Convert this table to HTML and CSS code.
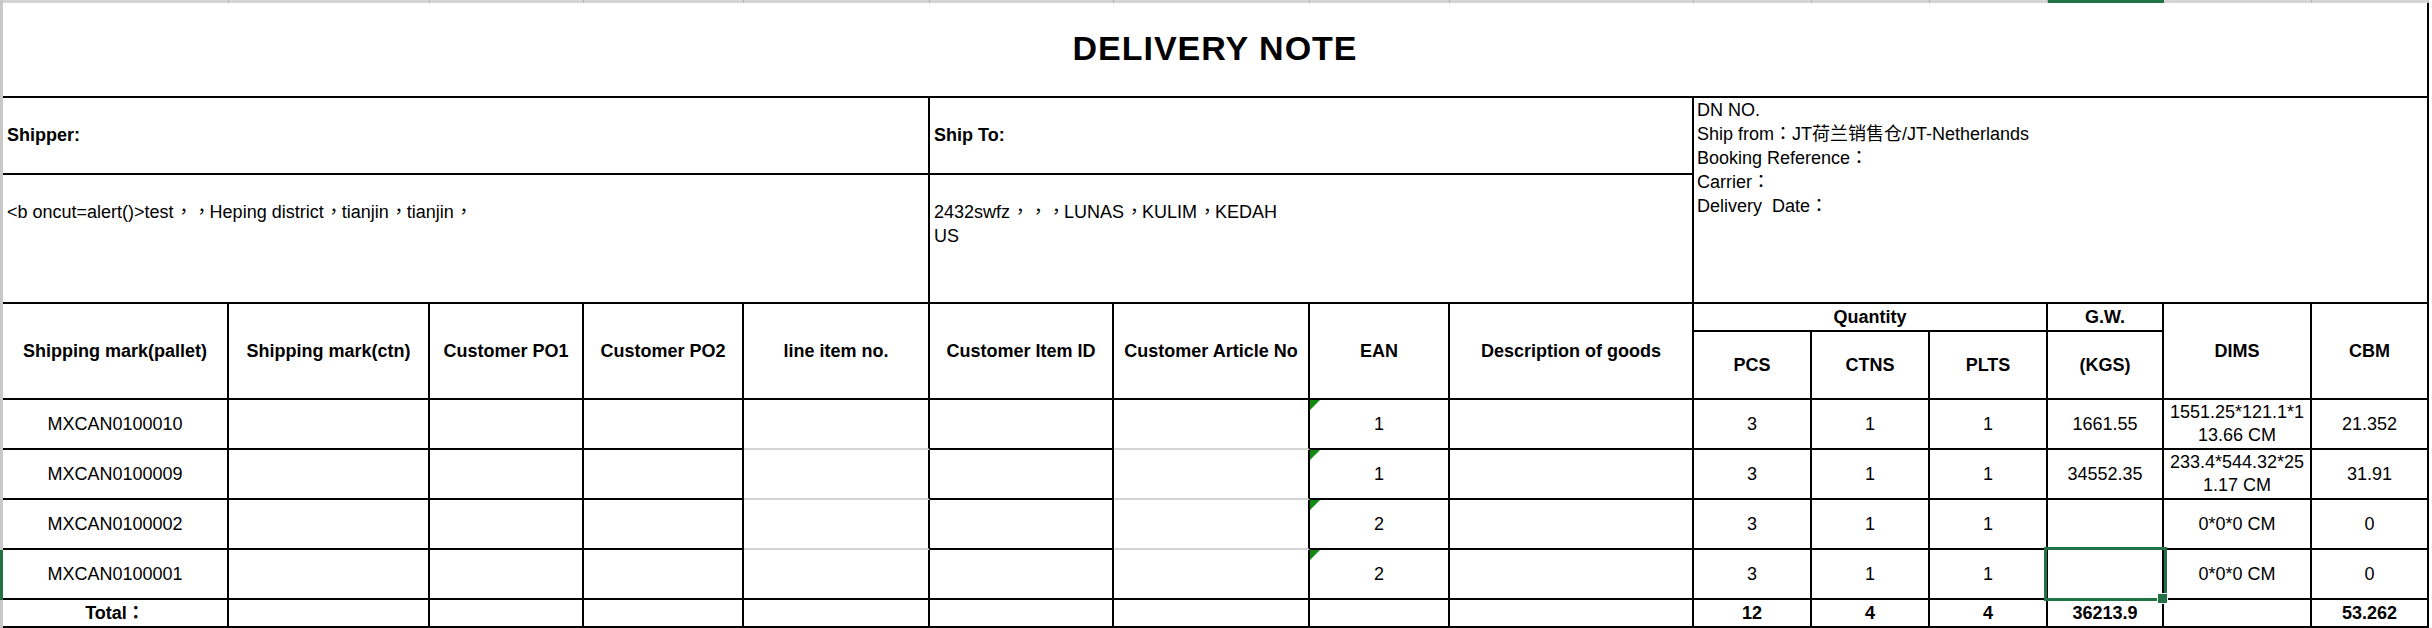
FILE: index.html
```html
<!DOCTYPE html>
<html lang="en">
<head>
<meta charset="utf-8">
<title>Delivery Note</title>
<link rel="stylesheet" href="styles.css">
</head>
<body>
<div class="sheet">
  <div class="edge-r"></div>
  <div class="edge-l"></div>
  <div class="edge-l edge-sel"></div>

  <div class="hd corner"></div>
  <div class="hd"></div><div class="hd"></div><div class="hd"></div><div class="hd"></div>
  <div class="hd"></div><div class="hd"></div><div class="hd"></div><div class="hd"></div>
  <div class="hd"></div><div class="hd"></div><div class="hd"></div><div class="hd"></div>
  <div class="hd hd-sel"></div>
  <div class="hd"></div><div class="hd"></div>

  <div class="c title s15">DELIVERY NOTE</div>

  <div class="c lbl s5">Shipper:</div>
  <div class="c lbl s4">Ship To:</div>
  <div class="c dn s6 r2">DN NO.
Ship from<span class="fw fwk">：</span>JT荷兰销售仓/JT-Netherlands
Booking Reference<span class="fw fwk">：</span>
Carrier<span class="fw fwk">：</span>
Delivery  Date<span class="fw fwk">：</span></div>
  <div class="c addr s5">&lt;b oncut=alert()&gt;test<span class="fw">，</span><span class="fw">，</span>Heping district<span class="fw">，</span>tianjin<span class="fw">，</span>tianjin<span class="fw">，</span></div>
  <div class="c addr s4">2432swfz<span class="fw">，</span><span class="fw">，</span><span class="fw">，</span>LUNAS<span class="fw">，</span>KULIM<span class="fw">，</span>KEDAH
US</div>

  <div class="c h r2">Shipping mark(pallet)</div>
  <div class="c h r2">Shipping mark(ctn)</div>
  <div class="c h r2">Customer PO1</div>
  <div class="c h r2">Customer PO2</div>
  <div class="c h r2">line item no.</div>
  <div class="c h r2">Customer Item ID</div>
  <div class="c h r2">Customer Article No</div>
  <div class="c h r2">EAN</div>
  <div class="c h r2">Description of goods</div>
  <div class="c h s3">Quantity</div>
  <div class="c h">G.W.</div>
  <div class="c h r2">DIMS</div>
  <div class="c h r2">CBM</div>
  <div class="c h">PCS</div>
  <div class="c h">CTNS</div>
  <div class="c h">PLTS</div>
  <div class="c h">(KGS)</div>

  <div class="c">MXCAN0100010</div>
  <div class="c"></div><div class="c"></div><div class="c"></div>
  <div class="c gb"></div>
  <div class="c"></div>
  <div class="c gb"></div>
  <div class="c ean">1</div>
  <div class="c"></div>
  <div class="c">3</div><div class="c">1</div><div class="c">1</div>
  <div class="c">1661.55</div>
  <div class="c dims"><span>1551.25*121.1*1<br>13.66 CM</span></div>
  <div class="c">21.352</div>

  <div class="c">MXCAN0100009</div>
  <div class="c"></div><div class="c"></div><div class="c"></div>
  <div class="c gb"></div>
  <div class="c"></div>
  <div class="c gb"></div>
  <div class="c ean">1</div>
  <div class="c"></div>
  <div class="c">3</div><div class="c">1</div><div class="c">1</div>
  <div class="c">34552.35</div>
  <div class="c dims"><span>233.4*544.32*25<br>1.17 CM</span></div>
  <div class="c">31.91</div>

  <div class="c">MXCAN0100002</div>
  <div class="c"></div><div class="c"></div><div class="c"></div>
  <div class="c gb"></div>
  <div class="c"></div>
  <div class="c gb"></div>
  <div class="c ean">2</div>
  <div class="c"></div>
  <div class="c">3</div><div class="c">1</div><div class="c">1</div>
  <div class="c"></div>
  <div class="c">0*0*0 CM</div>
  <div class="c">0</div>

  <div class="c">MXCAN0100001</div>
  <div class="c"></div><div class="c"></div><div class="c"></div>
  <div class="c"></div>
  <div class="c"></div>
  <div class="c"></div>
  <div class="c ean">2</div>
  <div class="c"></div>
  <div class="c">3</div><div class="c">1</div><div class="c">1</div>
  <div class="c sel"><span class="sel-box"></span><span class="sel-handle"></span></div>
  <div class="c">0*0*0 CM</div>
  <div class="c">0</div>

  <div class="c h"><span>Total<span class="fw fwk">：</span></span></div>
  <div class="c"></div><div class="c"></div><div class="c"></div><div class="c"></div>
  <div class="c"></div><div class="c"></div><div class="c"></div><div class="c"></div>
  <div class="c h">12</div>
  <div class="c h">4</div>
  <div class="c h">4</div>
  <div class="c h">36213.9</div>
  <div class="c"></div>
  <div class="c h">53.262</div>
</div>
<script src="script.js"></script>
</body>
</html>
```

FILE: styles.css
```css
html, body {
  margin: 0;
  padding: 0;
  background: #fff;
}

body {
  width: 2432px;
  height: 628px;
  overflow: hidden;
  font-family: "Liberation Sans", "Noto Sans CJK TC", sans-serif;
  font-size: 18px;
  color: #000;
}

.sheet {
  display: grid;
  grid-template-columns: 3px 226px 201px 154px 160px 186px 184px 196px 140px 244px 118px 118px 118px 116px 148px 117px 3px;
  grid-template-rows: 3px 95px 77px 129px 28px 68px 50px 50px 50px 50px 28px;
  width: 2432px;
  height: 628px;
}

/* spreadsheet chrome */
.edge-r {
  grid-column: 17;
  grid-row: 1 / -1;
  background: #fff;
}

.edge-l {
  grid-column: 1;
  grid-row: 2 / -1;
  background: #c8c8c8;
}

.edge-sel {
  grid-row: 10;
  background: #217346;
}

.hd {
  background: #d4d4d4;
  border-right: 1px solid #b4b4b4;
  box-sizing: border-box;
}

.corner {
  background: #c8c8c8;
  border-right: 0;
}

.hd-sel {
  background: #217346;
  border-right-color: #217346;
}

/* cells */
.c {
  box-sizing: border-box;
  border-right: 2px solid #000;
  border-bottom: 2px solid #000;
  display: flex;
  align-items: center;
  justify-content: center;
  text-align: center;
  white-space: nowrap;
  line-height: 21px;
  min-width: 0;
  position: relative;
}

.s3 { grid-column: span 3; }
.s4 { grid-column: span 4; }
.s5 { grid-column: span 5; }
.s6 { grid-column: span 6; }
.s15 { grid-column: span 15; }
.r2 { grid-row: span 2; }

.h { font-weight: bold; }

.title {
  font-size: 34px;
  font-weight: bold;
  letter-spacing: 1px;
  padding-bottom: 3px;
}

.lbl {
  justify-content: flex-start;
  padding-left: 4px;
  font-weight: bold;
}

.addr {
  display: block;
  text-align: left;
  white-space: pre;
  line-height: 24px;
  padding: 25px 4px 0;
}

.dn {
  display: block;
  text-align: left;
  white-space: pre;
  line-height: 24px;
  padding: 0 3px;
}

/* full-width punctuation: ink moved to the centre of its em box,
   advance kept at one em (padding + equal negative letter-spacing) */
.fw {
  padding-left: var(--fw-comma, 0px);
  letter-spacing: calc(-1 * var(--fw-comma, 0px));
}

.fwk {
  padding-left: var(--fw-colon, 0px);
  letter-spacing: calc(-1 * var(--fw-colon, 0px));
}

.gb {
  border-bottom-color: #d4d4d4;
}

.dims {
  line-height: 23px;
}

.ean::before {
  content: "";
  position: absolute;
  left: 0;
  top: 0;
  width: 0;
  height: 0;
  border-top: 10px solid #128a12;
  border-right: 10px solid transparent;
}

.sel-box {
  position: absolute;
  left: -4px;
  top: -3px;
  width: 123px;
  height: 54px;
  box-sizing: border-box;
  border: 3px solid #217346;
  z-index: 2;
}

.sel-handle {
  position: absolute;
  left: 109px;
  top: 43px;
  width: 11px;
  height: 11px;
  box-sizing: border-box;
  background: #217346;
  border: 1px solid #fff;
  z-index: 3;
}
```

FILE: script.js
```js
// Measure where the full-width comma / colon ink sits in the CJK fallback font
// and compute the shift that puts it where the spreadsheet draws it.
(function () {
  var size = 18;
  var ctx = document.createElement('canvas').getContext('2d');
  function shift(ch, targetRatio) {
    ctx.font = size + 'px "Noto Sans CJK TC"';
    var m = ctx.measureText(ch);
    var inkCenter = (m.actualBoundingBoxRight - m.actualBoundingBoxLeft) / 2;
    var s = targetRatio * size - inkCenter;
    return Math.max(0, Math.min(s, 0.45 * size));
  }
  var root = document.documentElement;
  root.style.setProperty('--fw-comma', shift('，', 0.56).toFixed(2) + 'px');
  root.style.setProperty('--fw-colon', shift('：', 0.5).toFixed(2) + 'px');
})();
```
